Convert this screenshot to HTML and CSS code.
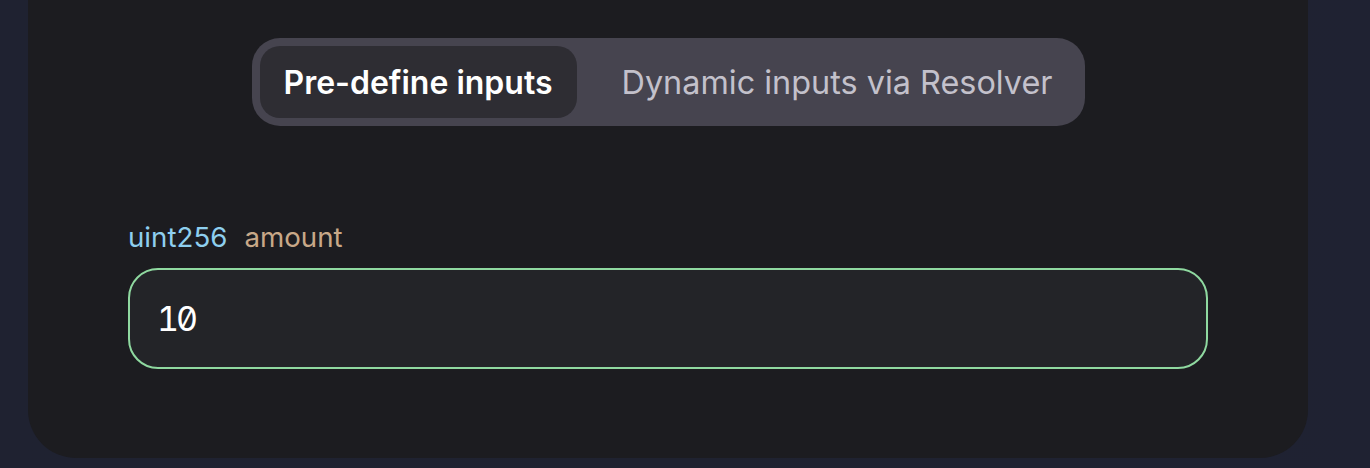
FILE: index.html
```html
<!DOCTYPE html>
<html lang="en">
<head>
<meta charset="utf-8">
<title>Inputs</title>
<link rel="stylesheet" href="styles.css">
</head>
<body>
<div class="page">
  <div class="card">
    <div class="tabs-row">
      <div class="tabs">
        <button class="tab active">Pre-define inputs</button>
        <button class="tab">Dynamic inputs via Resolver</button>
      </div>
    </div>
    <div class="field">
      <div class="label"><span class="type">uint256</span><span class="name">amount</span></div>
      <div class="input"><span class="value">10</span></div>
    </div>
  </div>
</div>
</body>
</html>
```

FILE: styles.css
```css
* { box-sizing: border-box; }
html, body { margin: 0; padding: 0; }
body {
  width: 1370px;
  height: 468px;
  overflow: hidden;
  background: linear-gradient(90deg, #1f2231 0%, #1f2230 50%, #1f2232 100%);
  font-family: "Inter", "Noto Sans", sans-serif;
}
.page {
  padding: 0 62px 0 28px;
}
.card {
  width: 1280px;
  height: 458px;
  background: #1c1c20;
  border-radius: 0 0 48px 48px;
  padding: 38px 100px 0;
  display: flex;
  flex-direction: column;
}
.tabs-row {
  display: flex;
  justify-content: center;
}
.tabs {
  display: flex;
  gap: 21px;
  padding: 8px;
  background: #46444f;
  border-radius: 28px;
}
.tab {
  height: 72px;
  padding: 0 24px;
  border: 0;
  border-radius: 20px;
  background: transparent;
  color: #c3c1cb;
  font-family: inherit;
  font-size: 32.4px;
  font-weight: 400;
  display: flex;
  align-items: center;
}
.tab.active {
  background: #2e2d33;
  color: #ffffff;
  font-size: 32px;
  font-weight: 600;
}
.field {
  margin-top: 94px;
  display: flex;
  flex-direction: column;
}
.label {
  display: flex;
  gap: 17px;
  font-size: 27.7px;
  line-height: 34px;
}
.type { color: #8ecfef; }
.name { color: #c8a888; }
.input {
  margin-top: 14px;
  height: 101px;
  border: 2px solid #8fd9a0;
  border-radius: 30px;
  background: #232428;
  padding: 0 27px;
  display: flex;
  align-items: center;
}
.value {
  color: #ffffff;
  font-size: 34px;
  letter-spacing: -3px;
  font-weight: 400;
  font-feature-settings: "zero" 1, "tnum" 1;
}
```
